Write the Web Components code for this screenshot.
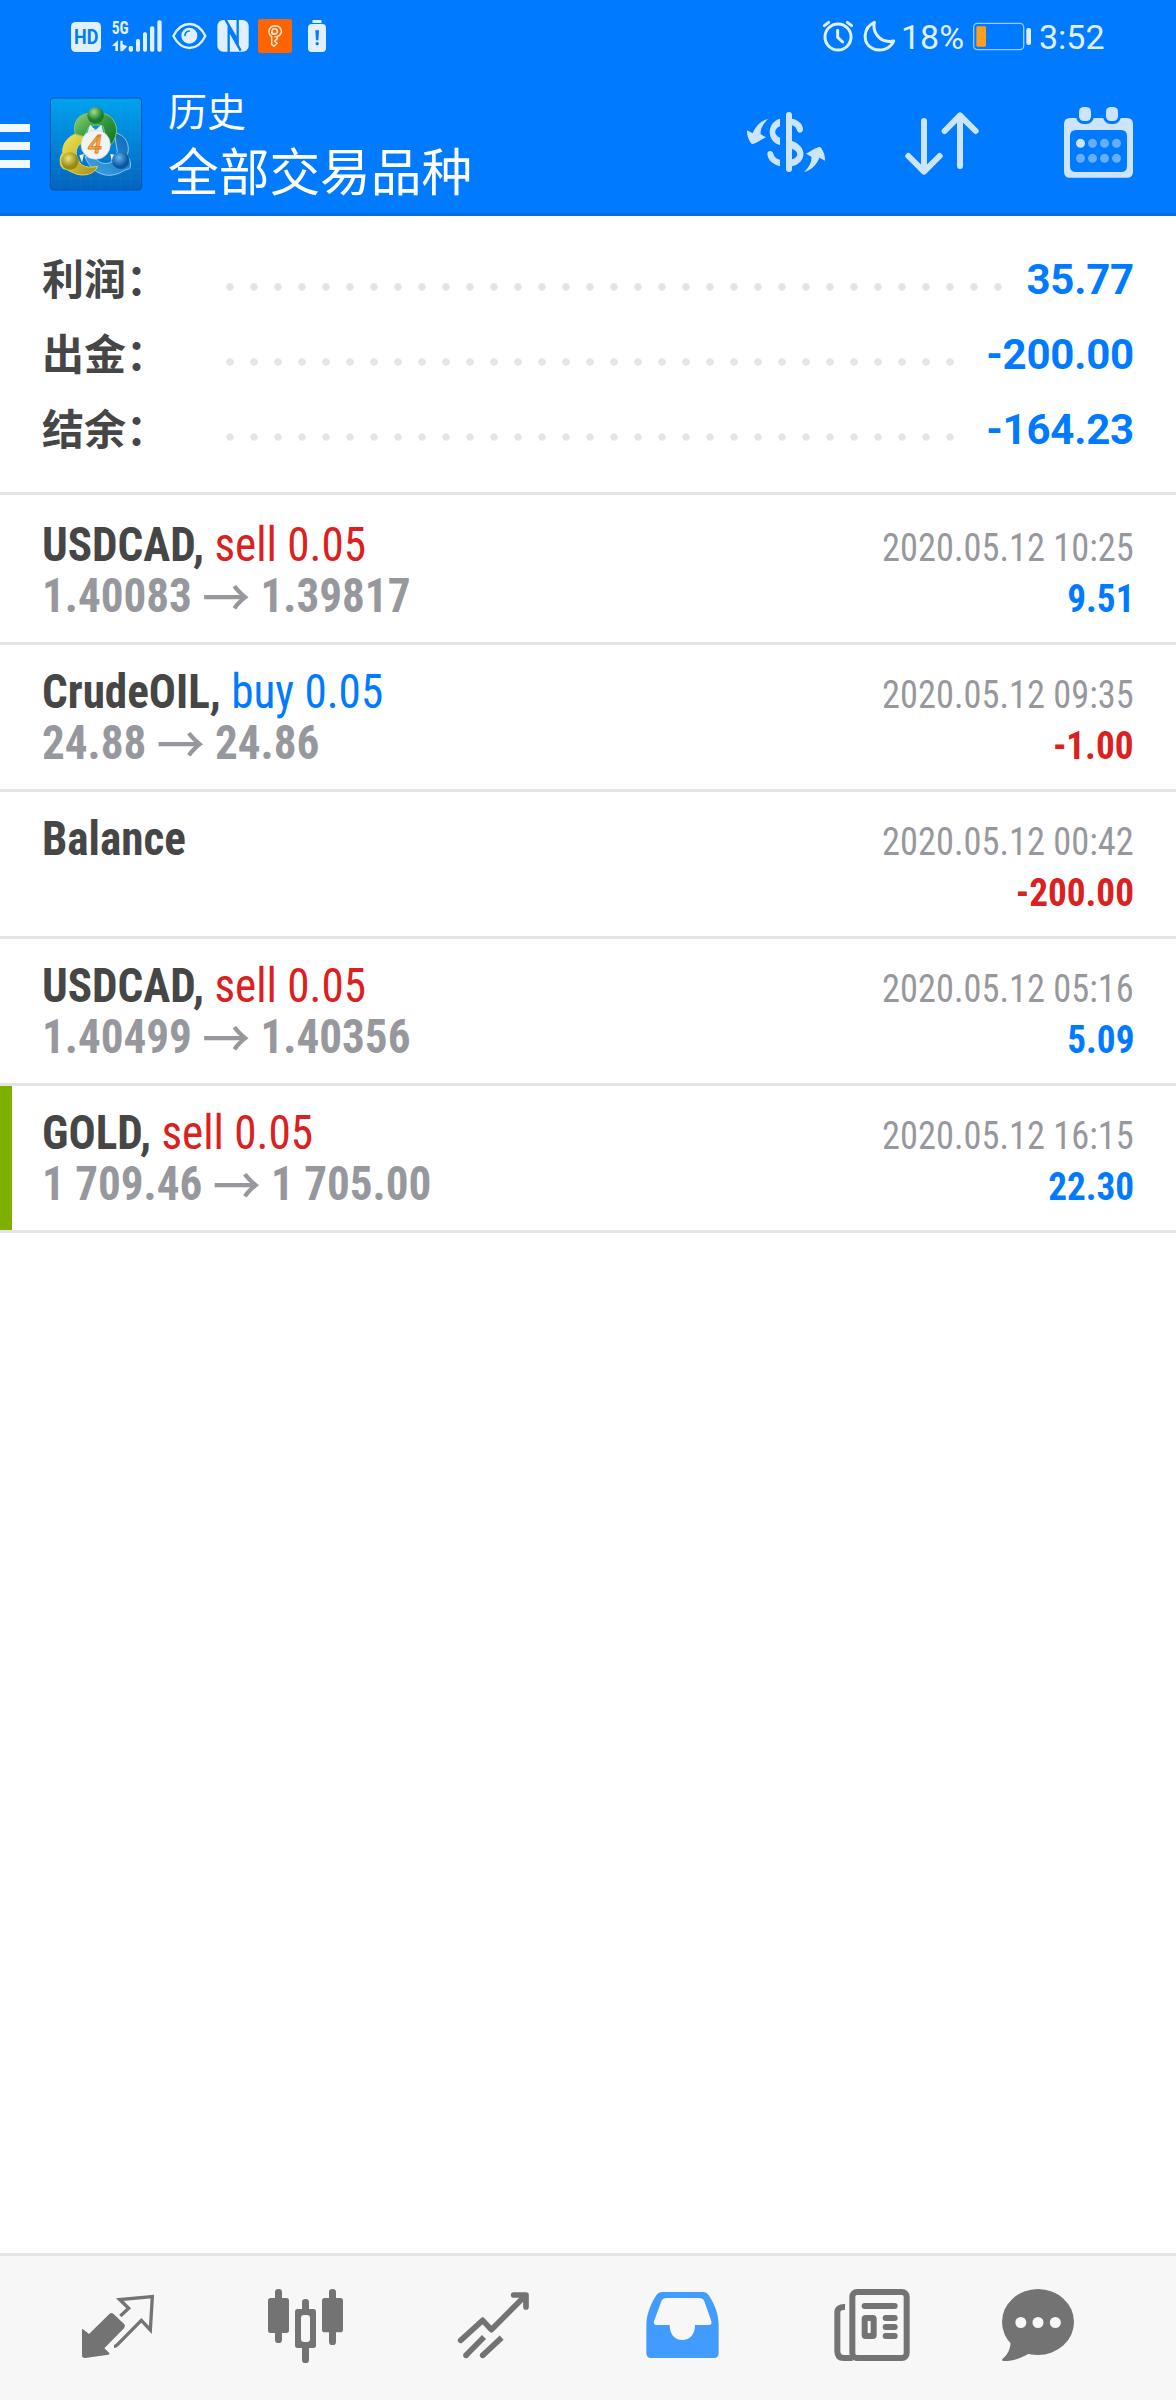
<!DOCTYPE html>
<html lang="zh-CN">
<head>
<meta charset="utf-8">
<title>历史</title>
<style>
html,body{margin:0;padding:0}
body{width:1176px;height:2400px;background:#fff;font-family:Roboto,"Noto Sans CJK SC",sans-serif}
</style>
</head>
<body>
<mt-app></mt-app>
<script>
const ICONS = {
  signal: ['330 54 162 105', `<text x="335" y="102" font-family="Roboto Condensed" font-weight="700" font-size="54" textLength="51" lengthAdjust="spacingAndGlyphs" fill="#e0f0ff">5G</text>
    <g fill="#e0f0ff"><path d="M335 138 354 121V153H346V137Z"/><path d="M361 122H368V133L382 139 368 154H361Z"/>
    <rect x="386" y="138" width="13" height="17" rx="5"/><rect x="408" y="117" width="12" height="38" rx="5"/><rect x="429" y="97" width="12" height="58" rx="5"/><rect x="450" y="79" width="13" height="76" rx="5"/><rect x="472" y="61" width="13" height="94" rx="5"/></g>`],
  hd: ['213 66 90 90', `<rect x="213" y="66" width="90" height="90" rx="14" fill="#e0f0ff"/><text x="222" y="131" font-family="Roboto" font-weight="700" font-size="58" textLength="73" lengthAdjust="spacingAndGlyphs" fill="#007aff">HD</text>`],
  eye: ['516 66 105 84', `<path d="M520 108C545 60 592 60 616 108C592 156 545 156 520 108Z" fill="none" stroke="#e0f0ff" stroke-width="7"/><circle cx="568" cy="107" r="24" fill="#e0f0ff"/><path d="M555 106Q556 94 568 93" fill="none" stroke="#007aff" stroke-width="5" stroke-linecap="round"/>`],
  nfc: ['651 60 96 96', `<rect x="652" y="60" width="94" height="95" rx="18" fill="#e0f0ff"/><path d="M686 158V88L722 152M676 58 713 122V58" fill="none" stroke="#007aff" stroke-width="7"/>`],
  key: ['774 57 102 102', `<rect x="774" y="57" width="102" height="102" rx="6" fill="#ff6400"/><g fill="none" stroke="#ffe9d5" stroke-width="4.5" stroke-linejoin="round" stroke-linecap="round"><path d="M813 108C802 98 806 78 825 77C843 77 850 96 838 106Q832 111 825 110M832 109V116L824 123 831 130 822 139 815 133V110"/><circle cx="824" cy="94" r="8"/><path d="M815 96Q814 104 825 103"/></g>`],
  batwarn: ['924 60 54 96', `<rect x="937" y="60" width="28" height="9" rx="3" fill="#e0f0ff"/><rect x="924" y="72" width="54" height="84" rx="11" fill="#e0f0ff"/><path d="M946 91H957L955 121H948Z" fill="#007aff"/><circle cx="951.500" cy="131" r="5" fill="#007aff"/>`],
  alarm: ['306 60 96 96', `<g fill="none" stroke="#e0f0ff" stroke-linecap="round" stroke-width="9"><circle cx="354" cy="111" r="39"/><path d="M353 91V112L368 126M313 77 326 67M395 77 382 67"/></g>`],
  moon: ['429 57 99 99', `<path d="M463 67C430 82 425 128 457 145C482 157 512 146 521 123C500 127 484 121 473 108C463 96 460 82 463 67Z" fill="none" stroke="#e0f0ff" stroke-width="9" stroke-linejoin="round"/>`],
  battery: ['759 66 177 87', `<rect x="761" y="70" width="150" height="79" rx="11" fill="none" stroke="#99ccff" stroke-width="4"/><rect x="769" y="79" width="29" height="61" rx="4" fill="#ff9d1c"/><rect x="919" y="84" width="14" height="51" rx="6" fill="#e0f0ff"/>`],
  menu: ['0 369 90 138', `<path d="M0 384H90M0 438H90M0 492H90" stroke="#f0f7ff" stroke-width="24"/>`],
  logo: ['147 288 282 288', `<defs>
    <linearGradient id="bg" x1="0" y1="0" x2="0" y2="1"><stop offset="0" stop-color="#00a3ef"/><stop offset="1" stop-color="#0463bd"/></linearGradient>
    <linearGradient id="g" x1="0" y1="0" x2="1" y2="1"><stop offset="0" stop-color="#91d17c"/><stop offset=".5" stop-color="#32973b"/><stop offset="1" stop-color="#0d6d21"/></linearGradient>
    <linearGradient id="y" x1="0" y1="0" x2="1" y2="1"><stop offset="0" stop-color="#f7ef5a"/><stop offset="1" stop-color="#a58d14"/></linearGradient>
    <linearGradient id="b" x1="1" y1="0" x2="0" y2="1"><stop offset="0" stop-color="#0d66b4"/><stop offset="1" stop-color="#3ea9e8"/></linearGradient>
    <radialGradient id="gb" cx=".4" cy=".3"><stop offset="0" stop-color="#a5dc90"/><stop offset="1" stop-color="#1a7d2c"/></radialGradient>
    <radialGradient id="yb" cx=".4" cy=".35"><stop offset="0" stop-color="#eee577"/><stop offset="1" stop-color="#958b12"/></radialGradient>
    <radialGradient id="bb" cx=".4" cy=".35"><stop offset="0" stop-color="#65b9ef"/><stop offset="1" stop-color="#0a58a4"/></radialGradient></defs>
    <rect x="151" y="294" width="274" height="276" rx="10" fill="url(#bg)" stroke="#0751a8" stroke-width="3"/>
    <path d="M181 296V568M211 296V568M241 296V568M271 296V568M301 296V568M331 296V568M361 296V568M391 296V568M153 326H423M153 356H423M153 386H423M153 416H423M153 446H423M153 476H423M153 506H423M153 536H423" stroke="#3eb4ee" stroke-opacity=".22" stroke-width="1.500"/>
    <path d="M343 398C380 405 392 440 381 466C392 480 396 502 386 507C368 510 358 526 325 526C290 524 266 500 255 470L285 474C300 494 325 495 340 482L352 455Z" fill="url(#b)" stroke="#8cc8ee" stroke-width="3"/>
    <path d="M243 398C207 402 186 430 188 458C176 474 179 498 190 506C210 509 220 525 250 525C272 524 288 513 292 499C266 505 243 500 236 482C222 463 227 430 256 425Z" fill="url(#y)" stroke="#e0d55c" stroke-width="3"/>
    <path d="M226 402C215 365 240 340 267 340H308C338 345 358 378 346 410C340 430 333 435 322 440L310 380Q287 368 266 382L252 410Z" fill="url(#g)" stroke="#86c877" stroke-width="3"/>
    <path d="M270 374 287 390 304 374 310 398H262Z" fill="#e9f3e2"/>
    <path d="M238 466 252 462 246 488ZM331 462 345 464 336 488Z" fill="#eef5e6"/>
    <circle cx="287" cy="346" r="25" fill="url(#gb)"/><circle cx="210" cy="483" r="26" fill="url(#yb)"/><circle cx="362" cy="481" r="26" fill="url(#bb)"/>
    <circle cx="287" cy="434" r="44" fill="#f2f3f5" stroke="#c9cdd3" stroke-width="2"/>
    <text x="285" y="460" text-anchor="middle" font-family="Roboto" font-style="italic" font-weight="500" font-size="76" fill="#f6ad4c" stroke="#e07b1c" stroke-width="2.500">4</text>`],
  money: ['78 333 240 186', `<g fill="#cce4ff"><rect x="198" y="336" width="18" height="180" rx="9"/>
    <path d="M180 356C139 366 139 425 180 435V413C161 405 161 386 180 379Z"/>
    <path d="M142 463C141 450 158 450 160 461C162 470 170 477 180 479V499C157 493 144 480 142 463Z"/>
    <path d="M216 356C236 360 247 371 249 386C250 399 235 402 232 393C229 384 226 379 216 376Z"/>
    <path fill-rule="evenodd" d="M216 423C262 438 262 488 216 499ZM216 446V478C237 471 237 454 216 446Z"/>
    <path d="M144 357C128 372 120 390 122 403L138 412C126 417 112 429 99 432Q94 432 92 428C85 417 81 408 81 393Q82 390 85 393L98 400C105 380 122 362 144 357Z"/>
    <path transform="rotate(180 198 436.500)" d="M144 357C128 372 120 390 122 403L138 412C126 417 112 429 99 432Q94 432 92 428C85 417 81 408 81 393Q82 390 85 393L98 400C105 380 122 362 144 357Z"/></g>`],
  sort: ['552 333 228 195', `<path d="M612 363V512M565 468 612 515 659 468M720 498V348M674 393 720 346 767 393" fill="none" stroke="#cce4ff" stroke-width="18" stroke-linecap="round" stroke-linejoin="round"/>`],
  calendar: ['1029 318 213 219', `<path fill-rule="evenodd" fill="#cce4ff" d="M1050 354H1221Q1239 354 1239 372V515Q1239 533 1221 533H1050Q1032 533 1032 515V372Q1032 354 1050 354ZM1068 390Q1050 390 1050 408V498Q1050 516 1068 516H1203Q1221 516 1221 498V408Q1221 390 1203 390Z"/>
    <g fill="#cce4ff" stroke="#007aff" stroke-width="18" paint-order="stroke"><rect x="1077" y="321" width="36" height="42" rx="14"/><rect x="1158" y="321" width="36" height="42" rx="14"/></g>
    <g fill="#66afff"><circle cx="1081.500" cy="430" r="13.500" fill="#cce4ff"/><circle cx="1117.500" cy="430" r="13.500"/><circle cx="1153.500" cy="430" r="13.500"/><circle cx="1189.500" cy="430" r="13.500"/><circle cx="1081.500" cy="475" r="13.500"/><circle cx="1117.500" cy="475" r="13.500"/><circle cx="1153.500" cy="475" r="13.500"/><circle cx="1189.500" cy="475" r="13.500"/></g>`],
  quotes: ['33 24 225 225', `<path fill="#737373" d="M36 150Q36 145 41 149L57 162 118 102Q124 96 130 101L163 133Q168 139 162 145L103 205 117 218Q121 223 114 224L46 234Q36 235 36 226Z"/><path fill="none" stroke="#737373" stroke-width="10" d="M151 108 176 85 149 58.500 247 50 241 150 214 121 143 193Q137 199 132 199"/>`],
  chart: ['591 24 231 228', `<g fill="#737373"><rect x="594" y="54" width="63" height="105" rx="8"/><rect x="615" y="27" width="21" height="162" rx="10"/><rect x="756" y="54" width="63" height="103" rx="8"/><rect x="777" y="27" width="21" height="168" rx="10"/><rect x="696" y="57" width="21" height="192" rx="10"/><rect x="675" y="87" width="63" height="117" rx="8"/></g><rect x="693" y="105" width="27" height="81" rx="9" fill="#f7f7f7"/>`],
  trade: ['1161 33 219 204', `<g fill="none" stroke="#737373" stroke-width="17"><path stroke-linecap="round" stroke-linejoin="round" d="M1172 181 1238 121 1264 149 1365 48M1331 45H1368V81"/><path d="M1188 226 1242 171M1238 226 1295 173"/></g><circle cx="1188" cy="226" r="8.500" fill="#737373"/><circle cx="1238" cy="226" r="8.500" fill="#737373"/>`],
  history: ['27 33 225 204', `<path fill-rule="evenodd" fill="#429cff" d="M31 135C31 100 48 65 62 44Q67 36 78 36H202Q212 36 217 44C233 67 248 98 248 135V220Q248 234 234 234H45Q31 234 31 220ZM76 64Q80 54 92 54H188Q201 54 205 64L226 124Q229 135 219 135H177C177 162 162 180 139 180C116 180 101 162 101 135H62Q51 135 54 124Z"/>`],
  news: ['591 24 234 222', `<g fill="none" stroke="#737373" stroke-width="18"><rect x="649" y="36" width="163" height="198" rx="14"/><path d="M627 81Q604 80 604 97V213Q604 234 624 234H650"/><rect x="686" y="114" width="27" height="54" rx="3"/><path stroke-linecap="round" d="M686 78H776M749 114H776M749 141H776M749 168H776"/></g>`],
  chat: ['1095 24 222 222', `<g fill="#737373"><ellipse cx="1206" cy="126" rx="108" ry="99"/><path d="M1124 180C1125 206 1114 226 1100 236Q1095 243 1103 243C1132 243 1155 235 1180 220Z"/></g><g fill="#f7f7f7"><circle cx="1154.500" cy="127.500" r="16.500"/><circle cx="1206" cy="127.500" r="16.500"/><circle cx="1258" cy="127.500" r="16.500"/></g>`]
};

/* Icons are drawn on a grid of three units per CSS pixel. */
customElements.define('mt-icon', class extends HTMLElement {
  connectedCallback() {
    const [box, art] = ICONS[this.getAttribute('name')];
    const [, , w, h] = box.split(' ').map(Number);
    this.attachShadow({mode: 'open'}).innerHTML =
      `<style>:host{display:block;flex:none}svg{display:block}</style><svg viewBox="${box}" width="${w / 3}" height="${h / 3}">${art}</svg>`;
  }
});

const define = (name, html) => customElements.define(name, class extends HTMLElement {
  connectedCallback() {
    const t = document.createElement('template');
    t.innerHTML = html;
    this.attachShadow({mode: 'open'}).append(t.content.cloneNode(true));
  }
});

define('mt-status', `<style>
:host{display:flex;height:72px;box-sizing:border-box;align-items:flex-start;color:#e0f0ff;font:400 34px/40px Roboto}
mt-icon{margin-top:var(--t)}
.sp{flex:1}
span{margin-top:17px;white-space:pre}
</style>
<mt-icon name="hd" style="--t:22px;margin-left:71px"></mt-icon>
<mt-icon name="signal" style="--t:18px;margin-left:9px"></mt-icon>
<mt-icon name="eye" style="--t:22px;margin-left:8px"></mt-icon>
<mt-icon name="nfc" style="--t:20px;margin-left:10px"></mt-icon>
<mt-icon name="key" style="--t:19px;margin-left:9px"></mt-icon>
<mt-icon name="batwarn" style="--t:20px;margin-left:16px"></mt-icon>
<div class="sp"></div>
<mt-icon name="alarm" style="--t:20px"></mt-icon>
<mt-icon name="moon" style="--t:19px;margin-left:9px"></mt-icon>
<span style="width:71px;margin-left:5px">18%</span>
<mt-icon name="battery" style="--t:22px;margin-left:1px"></mt-icon>
<span style="margin-left:7px;width:137px">3:52</span>`);

define('mt-header', `<style>
:host{display:flex;height:141px;align-items:flex-start;color:#fff;font-family:"Noto Sans CJK SC",sans-serif;font-weight:400}
.titles{flex:1;margin:12px 0 0 25px;white-space:nowrap}
.sub{font-size:39px;line-height:50px}
.main{font-size:50.7px;line-height:70px}
</style>
<mt-icon name="menu" style="margin-top:51px"></mt-icon>
<mt-icon name="logo" style="margin:24px 0 0 19px"></mt-icon>
<div class="titles"><div class="sub"><slot name="sub"></slot></div><div class="main"><slot name="title"></slot></div></div>
<mt-icon name="money" style="margin-top:39px"></mt-icon>
<mt-icon name="sort" style="margin:39px 0 0 78px"></mt-icon>
<mt-icon name="calendar" style="margin:34px 42px 0 83px"></mt-icon>`);

define('mt-total', `<style>
:host{display:flex;height:75px;align-items:flex-start;padding:0 42px;font-weight:700;font-size:42px}
.label{width:176px;color:#464646;font-family:"Noto Sans CJK SC",sans-serif;white-space:nowrap;line-height:67px}
.dots{flex:1;height:24px;margin:32px 20px 0 0;background:radial-gradient(circle at 12px 12px,#e5e5e5 3.300px,transparent 4.100px) 0 0/24px 24px}
.value{color:#007aff;font-family:Roboto,sans-serif;letter-spacing:-.2px;line-height:73px}
</style><div class="label"><slot name="label"></slot></div><div class="dots"></div><div class="value"><slot></slot></div>`);

define('mt-deal', `<style>
:host{display:flex;height:144px;border-bottom:3px solid #e5e5e5;padding:0 42px;justify-content:space-between;font-family:"Roboto Condensed",Roboto,sans-serif;white-space:nowrap}
:host([first]){padding-top:3px}
:host([marked]){box-shadow:inset 12px 0 #7fb000}
.l,.r{display:flex;flex-direction:column}
.l{padding-top:21px;font-size:48px}
.r{padding-top:25px;align-items:flex-end;font-size:39px}
.l>*,.r>*{height:51px;line-height:51px}
.name,.price{transform:scaleX(.94);transform-origin:0 0;font-weight:700}
.name{color:#464646}
.price{color:#97989d;display:flex}
.date{color:#97989d;transform:scaleX(.933);transform-origin:100% 0}
.val{font-weight:700;transform:scaleX(.954);transform-origin:100% 0}
::slotted(.sell),::slotted(.loss){color:#db2020}
::slotted(.buy),::slotted(.gain){color:#007aff}
::slotted(.sell),::slotted(.buy){font-weight:400}
</style>
<div class="l"><div class="name"><slot name="name"></slot><slot name="side"></slot></div><div class="price"><slot name="price"></slot></div></div>
<div class="r"><div class="date"><slot name="date"></slot></div><div class="val"><slot name="value"></slot></div></div>`);

define('mt-arrow', `<style>:host{display:inline-block;width:73px;text-align:center;font:500 51px/50px "Noto Sans CJK SC",sans-serif}</style>→`);

define('mt-nav', `<style>
:host{display:flex;align-items:flex-start;height:144px;border-top:3px solid #e5e5e5;background:#f7f7f7}
</style>
<mt-icon name="quotes" style="margin:32px 0 0 81px"></mt-icon>
<mt-icon name="chart" style="margin:32px 0 0 111px"></mt-icon>
<mt-icon name="trade" style="margin:35px 0 0 113px"></mt-icon>
<mt-icon name="history" style="margin:35px 0 0 115px"></mt-icon>
<mt-icon name="news" style="margin:32px 0 0 113px"></mt-icon>
<mt-icon name="chat" style="margin:32px 0 0 90px"></mt-icon>`);

const deals = [
  ['USDCAD', 'sell', '1.40083', '1.39817', '2020.05.12 10:25', '9.51'],
  ['CrudeOIL', 'buy', '24.88', '24.86', '2020.05.12 09:35', '-1.00'],
  ['Balance', '', '', '', '2020.05.12 00:42', '-200.00'],
  ['USDCAD', 'sell', '1.40499', '1.40356', '2020.05.12 05:16', '5.09'],
  ['GOLD', 'sell', '1 709.46', '1 705.00', '2020.05.12 16:15', '22.30']
];

define('mt-app', `<style>
:host{display:flex;flex-direction:column;height:2400px;background:#fff}
.top{background:#007aff;border-bottom:3px solid #006ee5}
.totals{padding:27px 0 24px;border-bottom:3px solid #e5e5e5}
.fill{flex:1}
</style>
<div class="top"><mt-status></mt-status><mt-header><span slot="sub">历史</span><span slot="title">全部交易品种</span></mt-header></div>
<div class="totals">
<mt-total><span slot="label">利润：</span>35.77</mt-total>
<mt-total><span slot="label">出金：</span>-200.00</mt-total>
<mt-total><span slot="label">结余：</span>-164.23</mt-total>
</div>
<div class="list">${deals.map((d, i) => `<mt-deal${i === 0 ? ' first' : ''}${i === 4 ? ' marked' : ''}><span slot="name">${d[0]}${d[1] ? ', ' : ''}</span>${d[1] ? `<span slot="side" class="${d[1]}">${d[1]} 0.05</span><span slot="price">${d[2]}</span><mt-arrow slot="price"></mt-arrow><span slot="price">${d[3]}</span>` : ''}<span slot="date">${d[4]}</span><span slot="value" class="${d[5][0] === '-' ? 'loss' : 'gain'}">${d[5]}</span></mt-deal>`).join('')}</div>
<div class="fill"></div>
<mt-nav></mt-nav>`);
</script>
</body>
</html>
